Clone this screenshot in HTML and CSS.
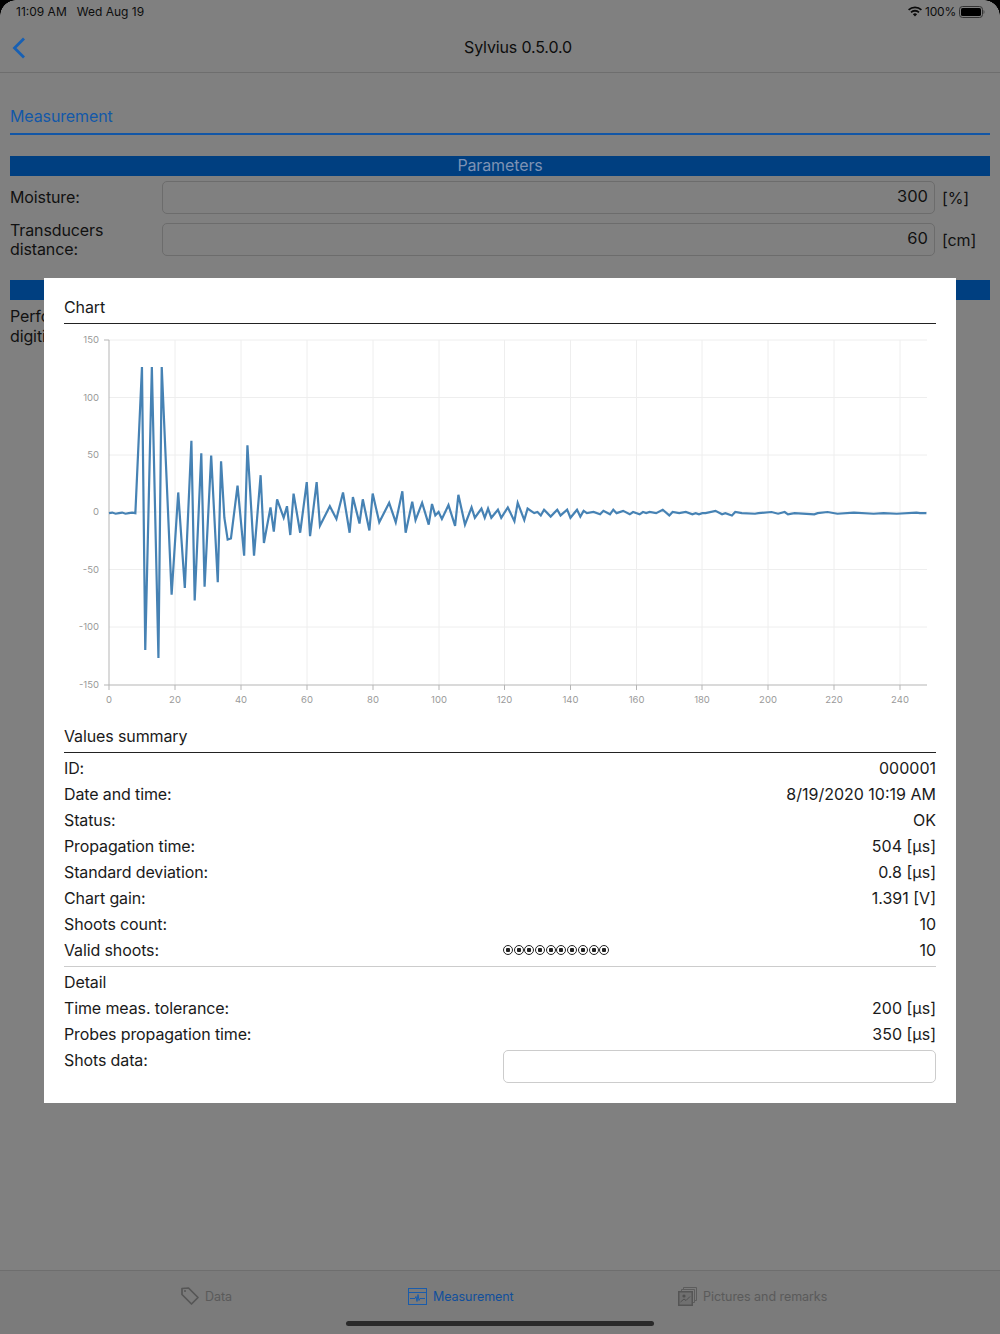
FILE: index.html
```html
<!DOCTYPE html>
<html lang="en">
<head>
<meta charset="utf-8">
<title>Sylvius</title>
<link rel="stylesheet" href="styles.css">
</head>
<body>
<div class="screen">
  <header class="statusbar">
    <span class="clock">11:09 AM</span><span class="date">Wed Aug 19</span>
    <span class="status-right">
      <svg class="wifi" width="14" height="11" viewBox="0 0 14 11"><path d="M7 10.600 4.900 8.300a3 3 0 0 1 4.200 0zM3.600 7 2.400 5.700a6.600 6.600 0 0 1 9.200 0L10.400 7a4.900 4.900 0 0 0-6.800 0zM1.200 4.600 0 3.300a10 10 0 0 1 14 0l-1.200 1.300a8.300 8.300 0 0 0-11.600 0z" fill="#0a0a0a"/></svg>
      <span class="pct">100%</span>
      <svg width="26" height="12" viewBox="0 0 26 12"><rect x=".5" y=".5" width="23" height="11" rx="3" fill="none" stroke="#333"/><rect x="2" y="2" width="20" height="8" rx="1.600" fill="#000"/><path d="M24.500 4v4a2 2 0 0 0 1-2 2 2 0 0 0-1-2z" fill="#444"/></svg>
    </span>
  </header>
  <nav class="navbar">
    <svg class="back" width="14" height="22" viewBox="0 0 14 22"><path d="M12 1.500 2.500 11l9.500 9.500" fill="none" stroke="#1760b4" stroke-width="2.800"/></svg>
    <span class="title">Sylvius 0.5.0.0</span>
  </nav>
  <main class="content">
    <h1 class="section-title">Measurement</h1>
    <div class="bar">Parameters</div>
    <div class="field">
      <label class="field-label">Moisture:</label>
      <div class="input">300</div>
      <span class="unit">[%]</span>
    </div>
    <div class="field field-two">
      <label class="field-label">Transducers distance:</label>
      <div class="input">60</div>
      <span class="unit">[cm]</span>
    </div>
    <div class="bar bar-second"></div>
    <p class="behind">Perform<br>digitize</p>
  </main>
  <footer class="tabbar">
    <div class="tab tab-data">
      <svg width="20" height="20" viewBox="0 0 20 20"><path d="M2 2.500 8.500 2 18 11.500 11.500 18 2 8.500z" fill="none" stroke="#565656" stroke-width="1.700" stroke-linejoin="round"/><circle cx="5" cy="5" r="1" fill="#565656"/></svg>
      <span>Data</span>
    </div>
    <div class="tab tab-measure">
      <svg width="19" height="17" viewBox="0 0 19 17"><rect x=".5" y=".5" width="18" height="16" fill="none" stroke="#1a5cab"/><path d="M.5 4.500h18" stroke="#1a5cab"/><path d="M2 10.500h5l1-2 1 5 1-7 1 6 1-2h5" fill="none" stroke="#1a5cab"/></svg>
      <span>Measurement</span>
    </div>
    <div class="tab tab-pictures">
      <svg width="19" height="19" viewBox="0 0 19 19"><path d="M5.500 2.500v-2h13v13h-2" fill="none" stroke="#5c5c5c"/><path d="M3.500 4.500v-2h13v13h-2" fill="none" stroke="#5c5c5c"/><rect x=".75" y="4.750" width="13.500" height="13.500" fill="#707070" stroke="#555" stroke-width="1.500"/><path d="M2.500 15l3.500-3 2 1.500 4-4" fill="none" stroke="#505050"/><circle cx="6" cy="9" r="1.600" fill="#505050"/></svg>
      <span>Pictures and remarks</span>
    </div>
  </footer>
  <div class="home-indicator"></div>
  <i class="corner corner-left"></i><i class="corner corner-right"></i>

  <section class="modal">
    <h2 class="modal-heading">Chart</h2>
    <svg class="chart" width="912" height="390" viewBox="44 325 912 390">
      <g class="grid">
        <path d="M109 340H927M109 397.500H927M109 455H927M109 569.500H927M109 627H927M109 512H927"/>
        <path d="M175 340V685M241 340V685M307 340V685M373 340V685M439 340V685M504.500 340V685M570.500 340V685M636.500 340V685M702 340V685M768 340V685M834 340V685M900 340V685"/>
      </g>
      <path class="axis" d="M104 340h5V685h-5M109 685H927M109 685v5M175 685v5M241 685v5M307 685v5M373 685v5M439 685v5M504.500 685v5M570.500 685v5M636.500 685v5M702 685v5M768 685v5M834 685v5M900 685v5"/>
      <g class="ticks ticks-y">
        <text x="99" y="343">150</text><text x="99" y="400.500">100</text><text x="99" y="458">50</text><text x="99" y="515">0</text><text x="99" y="572.500">-50</text><text x="99" y="630">-100</text><text x="99" y="688">-150</text>
      </g>
      <g class="ticks ticks-x">
        <text x="109" y="703">0</text><text x="175" y="703">20</text><text x="241" y="703">40</text><text x="307" y="703">60</text><text x="373" y="703">80</text><text x="439" y="703">100</text><text x="504.500" y="703">120</text><text x="570.500" y="703">140</text><text x="636.500" y="703">160</text><text x="702" y="703">180</text><text x="768" y="703">200</text><text x="834" y="703">220</text><text x="900" y="703">240</text>
      </g>
      <g transform="translate(109 512) scale(3.296 -1.15)">
        <polyline class="signal" points="0,-1 1,-.5 2,-1.500 3,-1 4,-.5 5,-1.500 6,-1 7,-.5 8,-1 10,126 11,-120 13,126 15,-127 16,126 19,-72 21,17 23,-66 25,62 26,-77 28,51 29,-65 31,49 33,-61 34,44 35,-5 36,-24 37,-23 39,23 41,-38 42,58 44,-38 46,32 47,-27 49,4 50,-17 51,11 53,-5 54,5 55,-20 56,16 58,-18 60,26 61,-21 63,26 64,-12 67,5 69,-6 71,17 73,-18 74,13 76,-10 77,11 79,-16 80,16 82,-9 85,8 87,-9 89,18 90,-18 92,9 93,-7 95,8 97,-11 98,7 99,-3 100,0 101,-6 103,6 105,-12 106,15 108,-11 110,4 111,-5 113,3 114,-5 115,3 116,-5 118,2 119,-5 121,4 123,-8 124,8 126,-7 127,3 129,-1 130,0 131,-3 132,2 134,-4 136,2 137,-3 139,2 140,-5 142,2 143,-4 144,1 145,-1 147,0 149,-2 150,1 152,-2 153,2 154,-1 156,1 158,-2 159,0 161,-2 162,0 163,-1 164,0 166,-1 168,2 170,-3 171,0 173,-1 175,0 177,-2 178,-1 179,-2 180,-1 181,-1 184,1 186,-2 187,-1 189,-3 190,0 192,-1 196,-1.500 197,-1 201,0 203,-1.500 205,0 206,-2 208,-1 214,-2 215,-1 218,0 221,-1.500 226,-.5 232,-1.500 235,-1 239,-1.500 245,-.5 246,-1 248,-1"/>
      </g>
    </svg>
    <h2 class="modal-heading summary-heading">Values summary</h2>
    <dl class="rows">
      <div class="row"><dt>ID:</dt><dd>000001</dd></div>
      <div class="row"><dt>Date and time:</dt><dd>8/19/2020 10:19 AM</dd></div>
      <div class="row"><dt>Status:</dt><dd>OK</dd></div>
      <div class="row"><dt>Propagation time:</dt><dd>504 [µs]</dd></div>
      <div class="row"><dt>Standard deviation:</dt><dd>0.8 [µs]</dd></div>
      <div class="row"><dt>Chart gain:</dt><dd>1.391 [V]</dd></div>
      <div class="row"><dt>Shoots count:</dt><dd>10</dd></div>
      <div class="row row-shots"><dt>Valid shoots:</dt>
        <dd class="dots"><i></i><i></i><i></i><i></i><i></i><i></i><i></i><i></i><i></i><i></i></dd>
        <dd>10</dd></div>
    </dl>
    <h3 class="detail-heading">Detail</h3>
    <dl class="rows">
      <div class="row"><dt>Time meas. tolerance:</dt><dd>200 [µs]</dd></div>
      <div class="row"><dt>Probes propagation time:</dt><dd>350 [µs]</dd></div>
      <div class="row row-data"><dt>Shots data:</dt><dd class="data-box"></dd></div>
    </dl>
  </section>
</div>
</body>
</html>
```
FILE: styles.css
```css
* { box-sizing: border-box; }
html, body { margin: 0; padding: 0; }
body { width: 1000px; height: 1334px; overflow: hidden; font-family: Inter, "Liberation Sans", sans-serif; color: #111; background: #000; letter-spacing: -.12px; }
.screen { position: relative; width: 1000px; height: 1334px; background: #808080; display: flex; flex-direction: column; overflow: hidden; }

.statusbar { height: 23px; display: flex; align-items: center; padding: 0 16px; font-size: 12px; letter-spacing: 0; color: #0d0d0d; flex: none; }
.clock { margin-right: 10px; }
.status-right { margin-left: auto; display: flex; align-items: center; gap: 3px; margin-right: -1px; }
.pct { letter-spacing: -.2px; }
.navbar { height: 50px; flex: none; position: relative; display: flex; align-items: center; justify-content: center; border-bottom: 1px solid #6e6e6e; padding: 0 0 2px 36px; }
.title { font-size: 16px; color: #0d0d0d; letter-spacing: -.15px; }
.back { position: absolute; left: 12px; top: 14px; }

.content { flex: 1; padding: 32px 10px 0; }
.section-title { margin: 0 0 21px; font-weight: 400; font-size: 16px; line-height: 23px; color: #1358a8; border-bottom: 2px solid #1256a6; height: 30px; }
.bar { height: 20px; background: #003f80; color: #7d92b4; font-size: 16px; line-height: 19px; text-align: center; }
.field { display: flex; align-items: center; font-size: 16px; margin-top: 5px; height: 33px; }
.field-two { margin-top: 9px; }
.field-label { width: 152px; flex: none; line-height: 20px; padding-bottom: 2px; }
.field-two .field-label { line-height: 19px; padding: 1px 0 0; }
.input { width: 773px; height: 33px; flex: none; border: 1px solid #6c6c6c; border-radius: 5px; text-align: right; padding: 0 6px; line-height: 29px; font-size: 16.500px; letter-spacing: 0; }
.unit { margin-left: 7px; }
.bar-second { margin-top: 24px; }
.behind { margin: 6px 0 0; font-size: 16px; line-height: 20px; }

.tabbar { height: 64px; flex: none; border-top: 1px solid #6e6e6e; position: relative; font-size: 12.500px; background: #7b7b7b; letter-spacing: -.05px; }
.tab { position: absolute; top: 15px; display: flex; align-items: center; gap: 6px; height: 20px; }
.tab span { color: #5a5a5a; }
.tab-data { left: 180px; gap: 5px; }
.tab-measure { left: 408px; }
.tab-measure span { color: #114f9c; }
.tab-pictures { left: 678px; }
.home-indicator { position: absolute; left: 346px; bottom: 8px; width: 308px; height: 5px; border-radius: 3px; background: #2a2a2a; }
.corner { position: absolute; top: 0; width: 16px; height: 16px; }
.corner-left { left: 0; background: radial-gradient(circle at 16px 16px, transparent 15.500px, #000 16px); }
.corner-right { right: 0; background: radial-gradient(circle at 0 16px, transparent 15.500px, #000 16px); }

.modal { position: absolute; left: 44px; top: 278px; width: 912px; height: 825px; background: #fff; padding: 19px 20px 0; color: #1a1a1a; font-size: 16px; }
.modal-heading { margin: 0; font-weight: 400; font-size: 16px; line-height: 20px; height: 27px; border-bottom: 1px solid #222; color: #1a1a1a; }
.chart { display: block; margin: 1px -20px 0; }
.summary-heading { margin-top: 11px; }
.rows { margin: 0; padding-top: 2px; }
.row { display: flex; justify-content: space-between; align-items: center; height: 26px; }
.row dt, .row dd { margin: 0; }
.row dd { letter-spacing: 0; }
.row-shots { position: relative; }
.dots { position: absolute; left: 439px; top: 8px; display: flex; gap: .7px; }
.dots i { display: block; width: 10px; height: 10px; border: 1px solid #222; border-radius: 50%; background: radial-gradient(circle, #222 0 2px, #fff 2.500px); }
.detail-heading { margin: 3px 0 0; padding-top: 2px; border-top: 1px solid #ccc; font-weight: 400; font-size: 16px; line-height: 26px; height: 29px; }
.detail-heading + .rows { padding-top: 0; }
.row-data { align-items: flex-start; margin-top: 3px; height: 34px; }
.data-box { width: 433px; height: 33px; border: 1px solid #ccc; border-radius: 5px; }
.row-data dt { line-height: 20px; }

.grid path { stroke: #eee; stroke-width: 1; fill: none; }
.axis { stroke: #b5b5b5; stroke-width: 1; fill: none; }
.ticks { font-size: 9.500px; fill: #999; letter-spacing: 0; }
.ticks-y { text-anchor: end; }
.ticks-x { text-anchor: middle; }
.signal { fill: none; stroke: #4682b4; stroke-width: 2.200; vector-effect: non-scaling-stroke; }
```
